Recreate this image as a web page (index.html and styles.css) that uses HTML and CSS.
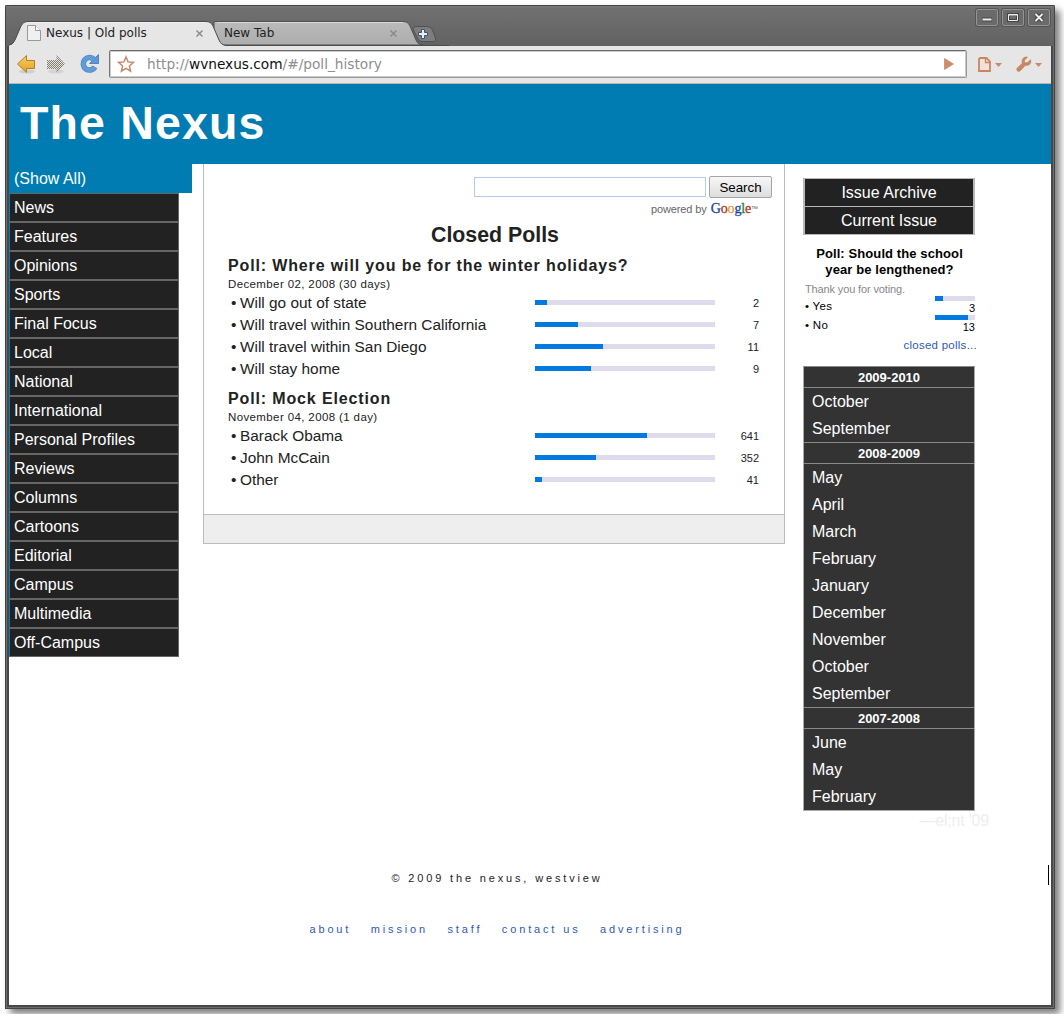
FILE: index.html
```html
<!DOCTYPE html>
<html lang="en">
<head>
<meta charset="utf-8">
<title>Nexus | Old polls</title>
<link rel="stylesheet" href="styles.css">
</head>
<body>
<div class="window">
  <div class="titlebar">
    <svg class="tabshapes" width="440" height="28" viewBox="0 0 440 28">
      <defs>
        <linearGradient id="tab2" x1="0" y1="0" x2="0" y2="1"><stop offset="0" stop-color="#bababa"/><stop offset="1" stop-color="#adadad"/></linearGradient>
      </defs>
      <path d="M205 3.500H394Q399 3.500 401 8L407 22Q409 27 414 27H205Z" fill="url(#tab2)" stroke="#505050"/>
      <path d="M404 11Q404 8.500 407 8.500H418Q422 8.500 423.500 12L426.500 20Q427.500 23.500 424.500 23.500H413Q410 23.500 408.500 20Z" fill="#7d7d7d" stroke="#515151"/>
      <path d="M0 28V27.500Q4 27 6 22L12 8Q14 3.500 18 3.500H197Q202 3.500 204 8L210 22Q212 27 217 27.500V28Z" fill="#e6e6e6"/>
      <path d="M0 27Q4 26.500 6 22L12 8Q14 3.500 18 3.500H197Q202 3.500 204 8L210 22Q212 27 217 27.500H440" fill="none" stroke="#4c4c4c"/>
      <path d="M18 4.500H197M208 4.500H394" stroke="#fff" opacity=".45"/>
      <path d="M412.500 11.500h3v3h3v3h-3v3h-3v-3h-3v-3h3z" fill="#eee" stroke="#405575"/>
    </svg>
    <div class="tabs">
      <div class="tab first">
        <svg width="14" height="16" viewBox="0 0 14 16"><path d="M.5.5h8l5 5v10H.5z" fill="#f0f0f0" stroke="#999"/><path d="M8.500.5v5h5" fill="#fff" stroke="#999"/></svg>
        <span>Nexus | Old polls</span>
        <svg class="x" width="7" height="7" viewBox="0 0 7 7"><path d="M.5.5l6 6M6.500.5l-6 6"/></svg>
      </div>
      <div class="tab second">
        <span>New Tab</span>
        <svg class="x" width="7" height="7" viewBox="0 0 7 7"><path d="M.5.5l6 6M6.500.5l-6 6"/></svg>
      </div>
    </div>
    <div class="controls">
      <span class="ctl"><svg width="22" height="17"><path d="M6 10.500h10" stroke="#444" stroke-width="4"/><path d="M6.500 10.500h9" stroke="#eee" stroke-width="2"/></svg></span>
      <span class="ctl"><svg width="22" height="17"><path d="M6.500 5.500h9v6h-9z" fill="none" stroke="#444" stroke-width="3"/><path d="M6.500 5.500h9v6h-9zM6.500 6h9" fill="none" stroke="#eee"/></svg></span>
      <span class="ctl"><svg width="22" height="17"><path d="M7.500 5l7 7m0-7l-7 7" stroke="#444" stroke-width="4"/><path d="M7.500 5l7 7m0-7l-7 7" stroke="#eee" stroke-width="1.800"/></svg></span>
    </div>
  </div>
  <div class="toolbar">
    <svg class="nav" width="98" height="37" viewBox="0 0 98 37">
      <defs>
        <linearGradient id="gold" x1="0" y1="0" x2="0" y2="1"><stop offset="0" stop-color="#f7cf62"/><stop offset="1" stop-color="#e0a228"/></linearGradient>
        <pattern id="dots" width="2" height="2" patternUnits="userSpaceOnUse"><path d="M0 0h1v1H0zM1 1h1v1H1z" fill="#85796a"/></pattern>
      </defs>
      <ellipse cx="18" cy="25.500" rx="8" ry="2" fill="#cfcfcf"/>
      <path d="M8.500 18l9-8.500v5h8v8h-8v4z" fill="url(#gold)" stroke="#b87e1c"/>
      <ellipse cx="47" cy="25.500" rx="8" ry="2" fill="#d4d4d4"/>
      <path d="M56 18l-8.500-9v5H38v9h9.500v4z" fill="url(#dots)"/>
      <path d="M85 13.300A6.300 6.300 0 1 0 86 21" fill="none" stroke="#4f84c0" stroke-width="5.500"/>
      <path d="M89.500 8.500v9h-9z" fill="#5e98d4" stroke="#4f84c0"/>
      <path d="M85 13.300A6.300 6.300 0 1 0 86 21" fill="none" stroke="#629cd8" stroke-width="4"/>
    </svg>
    <div class="address">
      <svg width="18" height="18" viewBox="0 0 18 18"><path d="M9 2l2.100 4.900 5.300.5-4 3.500 1.200 5.200L9 13.400l-4.600 2.700 1.200-5.200-4-3.500 5.300-.5z" fill="#fff" stroke="#c58a6c" stroke-width="1.500"/></svg>
      <span class="url">http://<b>wvnexus.com</b>/#/poll_history</span>
      <svg class="go" width="10" height="12" viewBox="0 0 10 12"><path d="M.5.5L9.500 6l-9 5.500z" fill="#cf8d6b" stroke="#be7d5d" stroke-width=".6"/></svg>
    </div>
    <svg class="menus" width="84" height="37" viewBox="0 0 84 37">
      <path d="M13 12h6.500l3.500 3.500V25H12V13z" fill="#eee2dc" stroke="#ca8560" stroke-width="1.800"/>
      <path d="M18.500 12v4.500H23" fill="none" stroke="#ca8560" stroke-width="1.300"/>
      <path d="M28 17h7l-3.500 4zM68 17h7l-3.500 4z" fill="#c98968"/>
      <path d="M60.500 11.200l-3 3v2.500h2.800l3.200-3c1.300 4-1.500 6.300-5 5.600l-5 5.200c-1.800 2.200-5-.2-3.200-2.500l5-4.800c-1-4.300 1.700-6.800 5.200-6z" fill="#ca8763" stroke="#bd7956" stroke-width=".6"/>
    </svg>
  </div>
  <div class="page">
    <header class="masthead"><h1>The Nexus</h1></header>
    <div class="columns">
      <nav class="sections">
        <a class="all">(Show All)</a>
        <a>News</a><a>Features</a><a>Opinions</a><a>Sports</a><a>Final Focus</a><a>Local</a><a>National</a><a>International</a><a>Personal Profiles</a><a>Reviews</a><a>Columns</a><a>Cartoons</a><a>Editorial</a><a>Campus</a><a>Multimedia</a><a>Off-Campus</a>
      </nav>
      <main class="content">
        <div class="inner">
          <div class="search"><input type="text" aria-label="Search"><button>Search</button></div>
          <div class="powered">powered by <span class="google"><i class="b">G</i><i class="r">o</i><i class="y">o</i><i class="b">g</i><i class="g">l</i><i class="r">e</i></span><small>™</small></div>
          <h2>Closed Polls</h2>
          <section class="poll">
            <h3>Poll: Where will you be for the winter holidays?</h3>
            <p class="date">December 02, 2008 (30 days)</p>
            <div class="row"><span>Will go out of state</span><div class="bar"><div style="width:12px"></div></div><em>2</em></div>
            <div class="row"><span>Will travel within Southern California</span><div class="bar"><div style="width:43px"></div></div><em>7</em></div>
            <div class="row"><span>Will travel within San Diego</span><div class="bar"><div style="width:68px"></div></div><em>11</em></div>
            <div class="row"><span>Will stay home</span><div class="bar"><div style="width:56px"></div></div><em>9</em></div>
          </section>
          <section class="poll">
            <h3>Poll: Mock Election</h3>
            <p class="date">November 04, 2008 (1 day)</p>
            <div class="row"><span>Barack Obama</span><div class="bar"><div style="width:112px"></div></div><em>641</em></div>
            <div class="row"><span>John McCain</span><div class="bar"><div style="width:61px"></div></div><em>352</em></div>
            <div class="row"><span>Other</span><div class="bar"><div style="width:7px"></div></div><em>41</em></div>
          </section>
        </div>
        <div class="strip"></div>
      </main>
      <aside class="side">
        <div class="issues"><a>Issue Archive</a><a>Current Issue</a></div>
        <div class="mini">
          <h4>Poll: Should the school<br>year be lengthened?</h4>
          <p class="thanks">Thank you for voting.</p>
          <div class="vote"><span>• Yes</span><div class="tally"><div class="bar"><div style="width:8px"></div></div><em>3</em></div></div>
          <div class="vote"><span>• No</span><div class="tally"><div class="bar"><div style="width:33px"></div></div><em>13</em></div></div>
          <a class="closed">closed polls...</a>
        </div>
        <div class="archive">
          <h5>2009-2010</h5><a>October</a><a>September</a>
          <h5>2008-2009</h5><a>May</a><a>April</a><a>March</a><a>February</a><a>January</a><a>December</a><a>November</a><a>October</a><a>September</a>
          <h5>2007-2008</h5><a>June</a><a>May</a><a>February</a>
        </div>
        <p class="credit">—el;nt '09</p>
      </aside>
    </div>
    <footer class="foot">
      <p>© 2009 the nexus, westview</p>
      <div class="links"><a>about</a><a>mission</a><a>staff</a><a>contact us</a><a>advertising</a></div>
    </footer>
    <div class="caret"></div>
  </div>
</div>
</body>
</html>
```
FILE: styles.css
```css
* { box-sizing: border-box; }
body { margin: 0; padding: 5px; background: #fff; font: 16px "Liberation Sans", Arial, sans-serif; color: #222; overflow: hidden; }
h1, h2, h3, h4, h5, p { margin: 0; }
em, i { font-style: normal; }

.window { position: relative; width: 1050px; height: 1004px; padding: 0 4px 4px; background: #484848; border-radius: 2px 2px 0 0; box-shadow: inset 0 0 0 1px #444, inset 0 0 0 2px #6c6c6c, 5px 5px 7px rgba(0,0,0,.5); }
.titlebar { position: relative; display: flex; height: 41px; margin: 0 -3px; padding: 0 3px; background: linear-gradient(#444 0, #444 1px, #7c7c7c 1px, #707070 3px, #626262 100%); }
.tabshapes { position: absolute; left: 3px; bottom: 0; }
.tabs { position: relative; display: flex; align-items: flex-end; flex: 1; font: 12px/16px "DejaVu Sans", sans-serif; color: #222; }
.tab { display: flex; align-items: center; height: 25px; padding-bottom: 1px; }
.tab .x { margin-left: auto; fill: none; stroke: #888; stroke-width: 1.400; }
.first { width: 194px; padding-left: 18px; }
.first span { margin-left: 5px; }
.second { width: 194px; padding-left: 21px; }
.controls { position: relative; display: flex; gap: 4px; padding-top: 4px; margin-right: 1px; }
.ctl { display: block; width: 22px; height: 17px; border: 1px solid #949494; border-radius: 2px; background: #6a6a6a; box-shadow: 0 0 0 1px #555; }
.ctl svg { display: block; margin: -1px; }

.toolbar { display: flex; height: 38px; background: #e6e6e6; border-bottom: 1px solid #b9b5b0; }
.nav { flex: none; width: 98px; height: 37px; margin-right: 2px; }
.nav, .menus { display: block; }
.address { display: flex; align-items: center; width: 858px; height: 28px; margin-top: 4px; padding: 0 12px 0 7px; background: #fff; border: 1px solid; border-color: #6c6c6c #999 #999 #777; border-radius: 2px; box-shadow: inset 0 0 0 1px #ccc; }
.url { margin-left: 12px; font: 13.7px/18px "DejaVu Sans", sans-serif; color: #8e8e8e; }
.url b { font-weight: normal; color: #111; }
.go { margin-left: auto; }

.page { position: relative; height: 921px; background: #fff; }
.masthead { height: 80px; padding: 8px 0 0 11px; background: #007cb2; }
h1 { color: #fff; font-size: 46.500px; line-height: 62px; letter-spacing: 1.150px; }
.columns { display: flex; align-items: flex-start; height: 682px; }
.sections { display: flex; flex-direction: column; width: 183px; margin-right: 11px; }
.sections a { width: 170px; height: 29px; padding-left: 4px; line-height: 27px; color: #fff; background: #222; border: 1px solid #666; border-left-color: #007cb2; }
.sections a.all { width: 183px; background: #007cb2; border-color: #007cb2; }

.content { width: 582px; border: 1px solid #bbb; border-top: 0; }
.inner { height: 350px; padding: 12px 12px 0 24px; }
.search { display: flex; justify-content: flex-end; align-items: center; gap: 3px; height: 22px; }
.search input { width: 232px; height: 20px; margin: 0; padding: 0; border: 1px solid #b7cbee; background: #fff; }
.search button { width: 63px; height: 22px; padding: 0; font: 13.33px "Liberation Sans", Arial, sans-serif; border: 1px solid #a5a5a5; border-radius: 2px; background: linear-gradient(#f8f8f8, #ddd); color: #000; }
.powered { display: flex; justify-content: flex-end; align-items: center; height: 22px; padding-right: 14px; font-size: 11px; letter-spacing: -.1px; color: #666; white-space: pre; }
.google { margin-left: 1px; font: 14px/20px "Liberation Serif", serif; letter-spacing: -.15px; -webkit-text-stroke: .3px currentColor; }
.powered small { font-size: 7px; line-height: 14px; }
.b { color: #1b44a8; } .r { color: #c42b25; } .y { color: #d7a51b; } .g { color: #258538; }
h2 { height: 36px; padding-right: 10px; font-size: 21.330px; line-height: 30px; text-align: center; }
.poll { margin-bottom: 9px; padding-right: 13px; }
h3 { font-size: 16px; line-height: 20px; letter-spacing: .860px; white-space: nowrap; }
.date { font-size: 11.500px; line-height: 17px; height: 16px; letter-spacing: .380px; }
.row { display: flex; align-items: center; height: 22px; font-size: 15.400px; }
.row span { width: 307px; padding-left: 3px; white-space: nowrap; }
.row span::before { content: "•"; display: inline-block; width: 9px; }
.bar { height: 5px; background: #dedcec; }
.bar div { height: 5px; background: #007ae0; }
.row .bar { width: 180px; margin-bottom: 1px; }
.row em { margin-left: auto; font-size: 11px; }
.strip { height: 29px; background: #eee; border-top: 1px solid #bbb; }

.side { width: 186px; margin-left: 18px; padding-top: 14px; }
.issues { display: grid; grid-template-rows: 27px 27px; gap: 1px; width: 172px; padding: 1px 2px; background: #b8b8b8; }
.issues a { color: #fff; background: #222; line-height: 27px; text-align: center; }
.mini { width: 172px; height: 131px; padding: 11px 0 0 2px; color: #000; }
h4 { font-size: 13px; line-height: 16px; text-align: center; letter-spacing: .1px; margin-left: -1px; }
.thanks { font-size: 11px; line-height: 16px; margin-top: 3px; color: #888; letter-spacing: -.130px; }
.vote { display: flex; justify-content: space-between; height: 19px; font-size: 11.500px; letter-spacing: .3px; line-height: 18px; }
.tally { width: 40px; display: flex; flex-direction: column; margin-top: -1px; }
.tally em { text-align: right; font-size: 11px; line-height: 14px; letter-spacing: 0; }
.closed { display: block; margin: 1px -2px 0 0; text-align: right; font-size: 11.500px; letter-spacing: .260px; line-height: 18px; color: #3058b8; }
.archive { width: 172px; border: 1px solid #aaa; border-top-color: #888; background: #333; color: #fff; }
.archive h5 { height: 22px; font-size: 13px; line-height: 21px; text-align: center; border: 1px solid #888; border-width: 1px 0; }
.archive h5:first-child { height: 21px; line-height: 22px; border-top: 0; }
.archive a { display: block; padding-left: 8px; line-height: 27px; }
.credit { text-align: right; color: #eee; line-height: 20px; letter-spacing: -.2px; }

.foot { width: 976px; padding-top: 24px; font-size: 11px; line-height: 16px; letter-spacing: 2.850px; text-align: center; }
.links { display: flex; justify-content: center; gap: 19.500px; margin-top: 35px; color: #3058b8; }
.caret { position: absolute; left: 1039px; top: 781px; width: 1px; height: 20px; background: #000; }
```
